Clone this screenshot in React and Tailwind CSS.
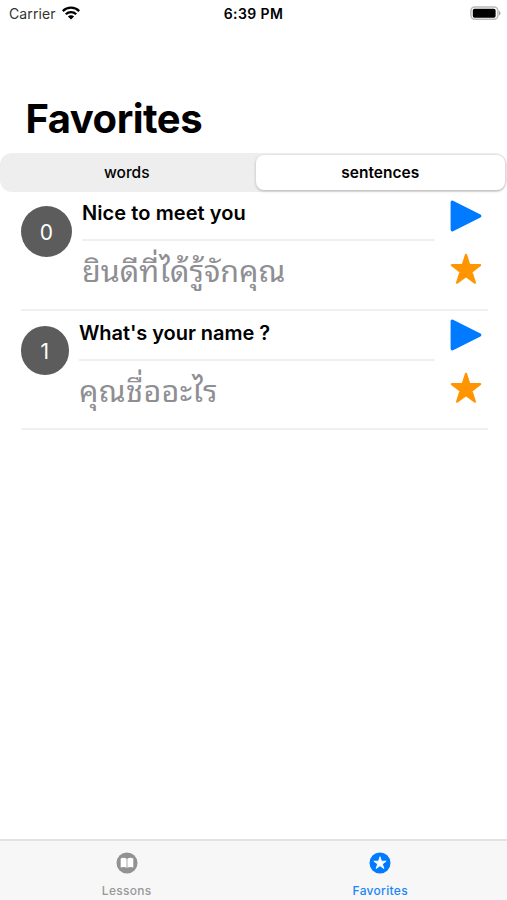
import React, { useState } from 'react';

const sentences = [
  {
    id: 0,
    text: 'Nice to meet you',
    thai: 'ยินดีที่ได้รู้จักคุณ',
    badge: 'w-[51.5px] h-[51.5px] mr-2.5',
    textClass: 'tracking-[0.08px]',
    thaiClass: 'text-[30.5px]',
  },
  {
    id: 1,
    text: "What's your name ?",
    thai: 'คุณชื่ออะไร',
    badge: 'w-[48.5px] h-[48.5px] mr-2.5 mt-px',
    textClass: 'tracking-[-0.05px]',
    thaiClass: 'text-[30.5px] tracking-[0.4px]',
  },
];

function WifiIcon() {
  return (
    <svg className="w-[18px] h-[14px]" viewBox="0 0 18 14">
      <g fill="none" stroke="#000" strokeWidth="2.3">
        <path d="M0.8 5.1a11.6 11.6 0 0 1 16.4 0" />
        <path d="M3.8 8.3a7.4 7.4 0 0 1 10.4 0" />
      </g>
      <path d="M9 13.6 5.9 10.5a4.4 4.4 0 0 1 6.2 0z" />
    </svg>
  );
}

function BatteryIcon() {
  return (
    <svg className="w-[31px] h-[15px]" viewBox="0 0 31 15">
      <rect x="0.9" y="0.9" width="27" height="12.4" rx="4" fill="#fff" stroke="#b9b9b9" strokeWidth="1.5" />
      <rect x="2.8" y="2.7" width="22.8" height="9" rx="1.8" />
      <path d="M29 5c2 .6 2 3.8 0 4.4z" fill="#a5a5a5" />
    </svg>
  );
}

function PlayIcon() {
  return (
    <svg className="w-8 h-8" viewBox="0 0 32 32">
      <path
        d="M2.3 2.3v27.4l27.4-13.7z"
        fill="#007aff"
        stroke="#007aff"
        strokeWidth="3.4"
        strokeLinejoin="round"
      />
    </svg>
  );
}

function StarIcon() {
  return (
    <svg className="w-8 h-8" viewBox="0 0 32 32">
      <path
        d="M16 1.8 19.3 12.2 30.1 12.2 21.4 18.8 24.9 29.7 16 23.1 7.1 29.7 10.6 18.8 1.9 12.2 12.7 12.2z"
        fill="#ff9500"
        stroke="#ff9500"
        strokeWidth="2.2"
        strokeLinejoin="round"
      />
    </svg>
  );
}

function BookIcon() {
  return (
    <svg className="w-[22px] h-[22px]" viewBox="0 0 22 22">
      <circle cx="11" cy="11" r="10.5" fill="#929292" />
      <path
        d="M4.7 6.5c2-1 4.3-1 5.9.2v9c-1.7-1-4-1-5.9-.1zM17.3 6.5c-2-1-4.300-1-5.900.2v9c1.700-1 4-1 5.900-.1z"
        fill="#fff"
      />
    </svg>
  );
}

function StarCircleIcon() {
  return (
    <svg className="w-[22px] h-[22px]" viewBox="0 0 22 22">
      <circle cx="11" cy="11" r="10.5" fill="#007aff" />
      <path
        d="M11 4.7 12.5 9.2 17.2 9.2 13.4 12 14.9 16.6 11 13.8 7.1 16.6 8.6 12 4.8 9.2 9.5 9.2z"
        fill="#fff"
        stroke="#fff"
        strokeWidth="0.8"
        strokeLinejoin="round"
      />
    </svg>
  );
}

function SentenceRow({ item }) {
  return (
    <li className="flex items-start h-[119.5px] pt-[14.5px] border-b-2 border-[#f0f0f0]">
      <div className={`flex items-center justify-center shrink-0 rounded-full bg-[#5c5c5c] text-white text-[21px] pt-[2px] ${item.badge}`}>
        {item.id}
      </div>
      <div className="flex-1 -mt-[13.5px]">
        <p className={`h-[49px] pt-[8px] leading-[26px] text-[20px] font-semibold border-b-2 border-[#f0f0f0] whitespace-nowrap ${item.textClass}`}>
          {item.text}
        </p>
        <p className={`h-[62px] leading-[55px] text-[#8e8e93] whitespace-nowrap font-['Thonburi','Noto_Sans_Thai_Looped','Loma','Garuda','Waree',sans-serif] ${item.thaiClass}`}>
          {item.thai}
        </p>
      </div>
      <div className="flex flex-col gap-[21px] ml-[15px] mr-[6px] -mt-[6px]">
        <button><PlayIcon /></button>
        <button><StarIcon /></button>
      </div>
    </li>
  );
}

export default function App() {
  const [segment, setSegment] = useState('sentences');

  return (
    <div className="flex flex-col h-[900px] w-full bg-white text-black overflow-hidden font-['Inter','Noto_Sans',sans-serif]">
      {/* status bar */}
      <div className="grid grid-cols-3 items-center h-[26px] px-[7px] text-[14px]">
        <div className="flex items-center gap-[6px] pl-[2px] text-[#333]">
          <span className="tracking-[0.1px]">Carrier</span>
          <WifiIcon />
        </div>
        <span className="text-center font-semibold tracking-[0.4px]">6:39 PM</span>
        <div className="flex justify-end -mr-px">
          <BatteryIcon />
        </div>
      </div>

      <h1 className="h-[127px] pt-[68px] pl-[25.5px] text-[40px] leading-[50px] font-bold tracking-[-0.5px]">Favorites</h1>

      {/* segmented control */}
      <div className="flex gap-[4px] h-[38.5px] p-[2px] rounded-[12px] bg-[#eeeeef] text-[15.5px]">
        {['words', 'sentences'].map((name) => (
          <button
            key={name}
            onClick={() => setSegment(name)}
            className={`flex-1 rounded-[8px] ${
              segment === name
                ? 'bg-white font-semibold shadow-[0_1px_3px_rgba(0,0,0,0.25)]'
                : 'font-medium'
            }`}
          >
            {name}
          </button>
        ))}
      </div>

      <ul className="flex-1 pl-[20.5px] pr-[19px] -mt-[0.5px]">
        {sentences.map((item) => (
          <SentenceRow key={item.id} item={item} />
        ))}
      </ul>

      {/* tab bar */}
      <nav className="flex h-[61px] bg-[#f7f7f7] border-t-2 border-[#e2e2e2] text-[12px] font-medium">
        <a className="flex flex-1 flex-col items-center pt-[11px] gap-[8px] text-[#989898]">
          <BookIcon />
          <span className="leading-[18px] tracking-[0.3px]">Lessons</span>
        </a>
        <a className="flex flex-1 flex-col items-center pt-[11px] gap-[8px] text-[#1c85fb]">
          <StarCircleIcon />
          <span className="leading-[18px] tracking-[0.3px]">Favorites</span>
        </a>
      </nav>
    </div>
  );
}
